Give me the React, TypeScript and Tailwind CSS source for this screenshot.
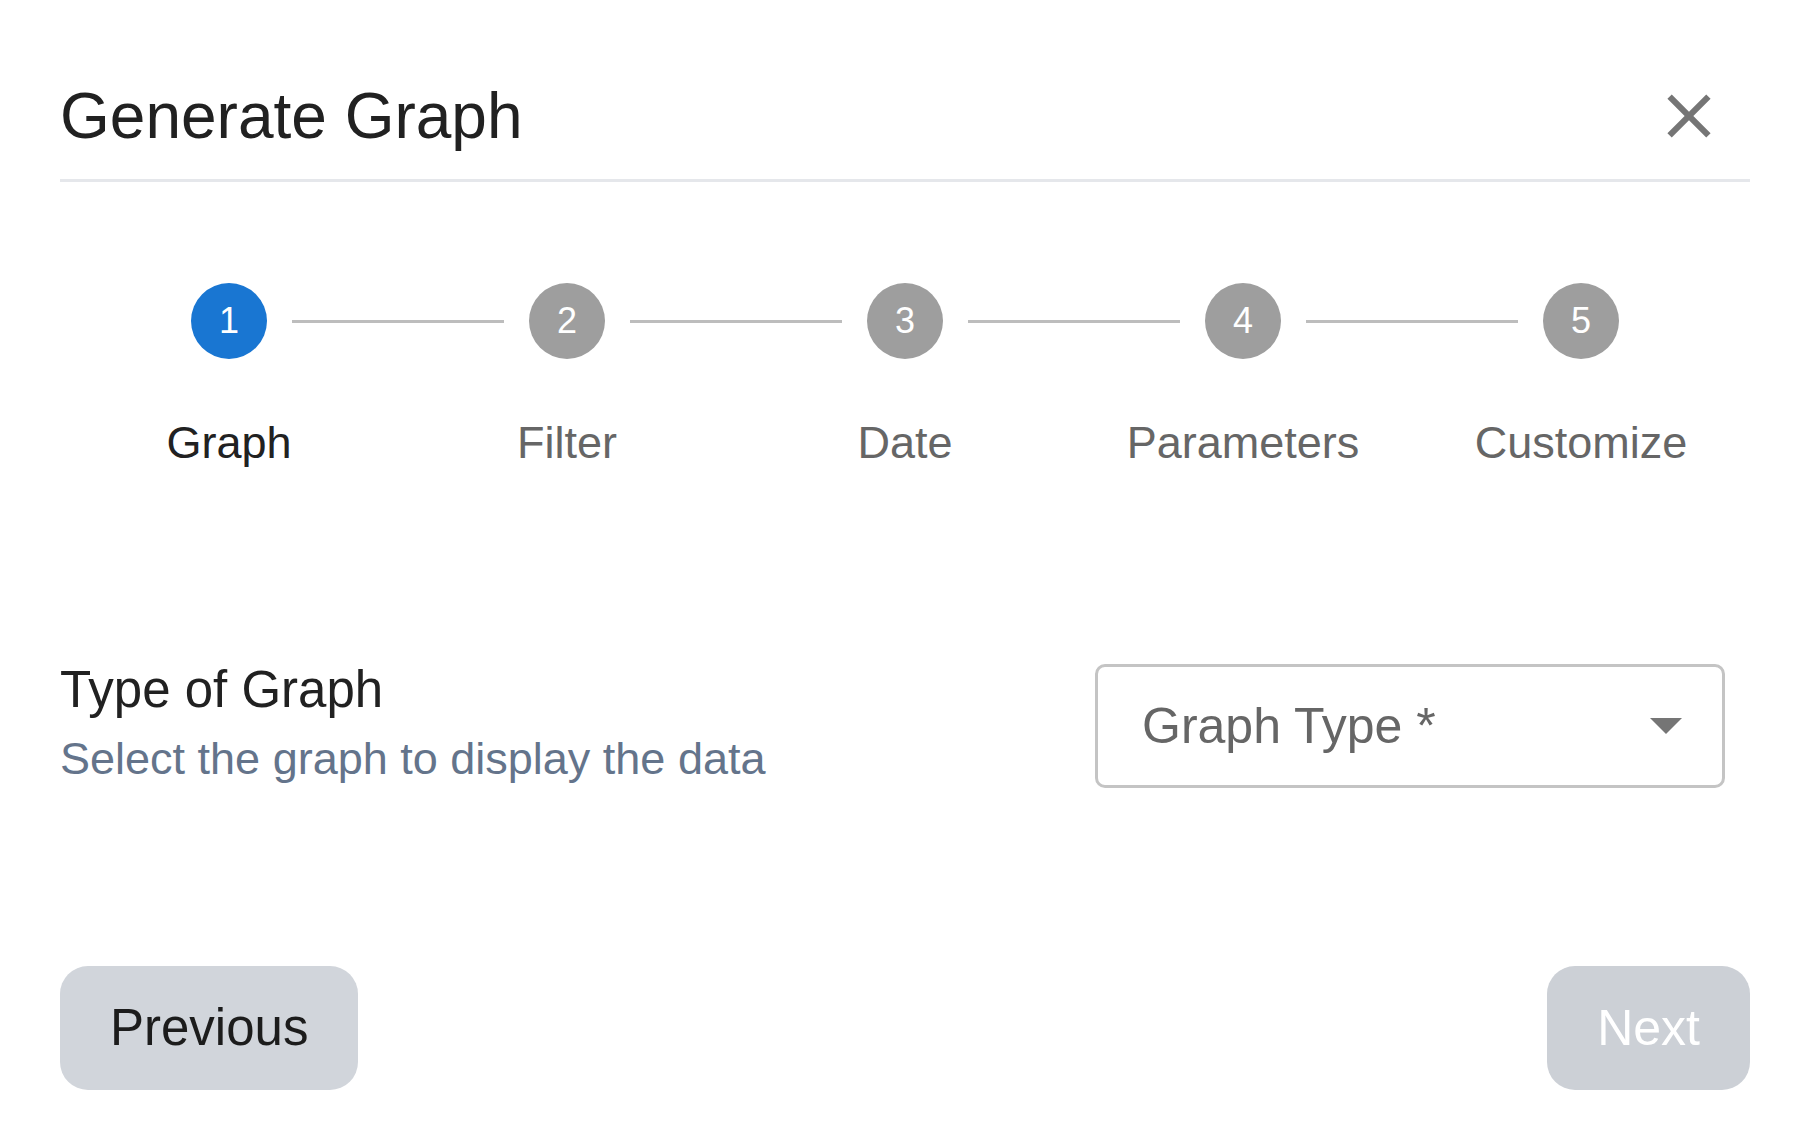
import React from 'react';

const steps = ['Graph', 'Filter', 'Date', 'Parameters', 'Customize'];

const StepItem = ({ label, index, active, first, last }: { label: string; index: number; active: boolean; first: boolean; last: boolean }) => (
  <div className="flex flex-col items-center">
    <div className="flex items-center w-full">
      <div className={`flex-1 h-[3px] mr-[25px] ${first ? 'bg-transparent' : 'bg-[#bdbdbd]'}`} />
      <div
        className={`w-[76px] h-[76px] rounded-full flex items-center justify-center text-white text-[36px] leading-none ${
          active ? 'bg-[#1976d2]' : 'bg-[#9e9e9e]'
        }`}
      >
        {index + 1}
      </div>
      <div className={`flex-1 h-[3px] ml-[25px] ${last ? 'bg-transparent' : 'bg-[#bdbdbd]'}`} />
    </div>
    <span className={`mt-[61px] text-[45px] leading-[45px] ${active ? 'text-[#212121]' : 'text-[#666666]'}`}>{label}</span>
  </div>
);

export default function App() {
  return (
    <div className="min-h-screen bg-white pl-[60px] pr-[53px] pt-[79px] font-['Liberation_Sans',Arial,sans-serif]">
      {/* Header */}
      <div className="flex items-center justify-between h-[74px]">
        <h1 className="text-[64px] leading-[64px] font-normal text-[#212121]">Generate Graph</h1>
        <button className="mr-[24px] text-[#757575]">
          <svg width="74" height="74" viewBox="0 0 24 24" fill="currentColor">
            <path d="M19 6.41 17.59 5 12 10.59 6.41 5 5 6.41 10.59 12 5 17.59 6.41 19 12 13.41 17.59 19 19 17.59 13.41 12z" />
          </svg>
        </button>
      </div>
      <div className="mt-[26px] h-[3px] bg-[#e5e7eb]" />

      {/* Stepper */}
      <div className="mt-[101px] grid grid-cols-5">
        {steps.map((s, i) => (
          <StepItem key={s} label={s} index={i} active={i === 0} first={i === 0} last={i === steps.length - 1} />
        ))}
      </div>

      {/* Graph type */}
      <div className="mt-[199px] flex justify-between items-start">
        <div>
          <h2 className="text-[51px] leading-[51px] text-[#212121]">Type of Graph</h2>
          <p className="mt-[21px] text-[45px] leading-[45px] text-[#64748b]">Select the graph to display the data</p>
        </div>
        <div className="mr-[25px] w-[630px] h-[124px] border-[3px] border-[#c4c4c4] rounded-[10px] flex items-center justify-between pl-[44px] pr-[40px]">
          <span className="text-[50px] leading-[50px] text-[#666666]">Graph Type *</span>
          <svg width="32" height="16" viewBox="0 0 32 16">
            <polygon points="0,0 32,0 16,16" fill="#757575" />
          </svg>
        </div>
      </div>

      {/* Footer buttons */}
      <div className="mt-[178px] flex justify-between">
        <button className="h-[124px] px-[50px] rounded-[28px] bg-[#d1d5db] text-[51px] text-[#1c1c1c]">Previous</button>
        <button className="h-[124px] px-[50px] rounded-[28px] bg-[#ccd0d6] text-[50px] text-white">Next</button>
      </div>
    </div>
  );
}
